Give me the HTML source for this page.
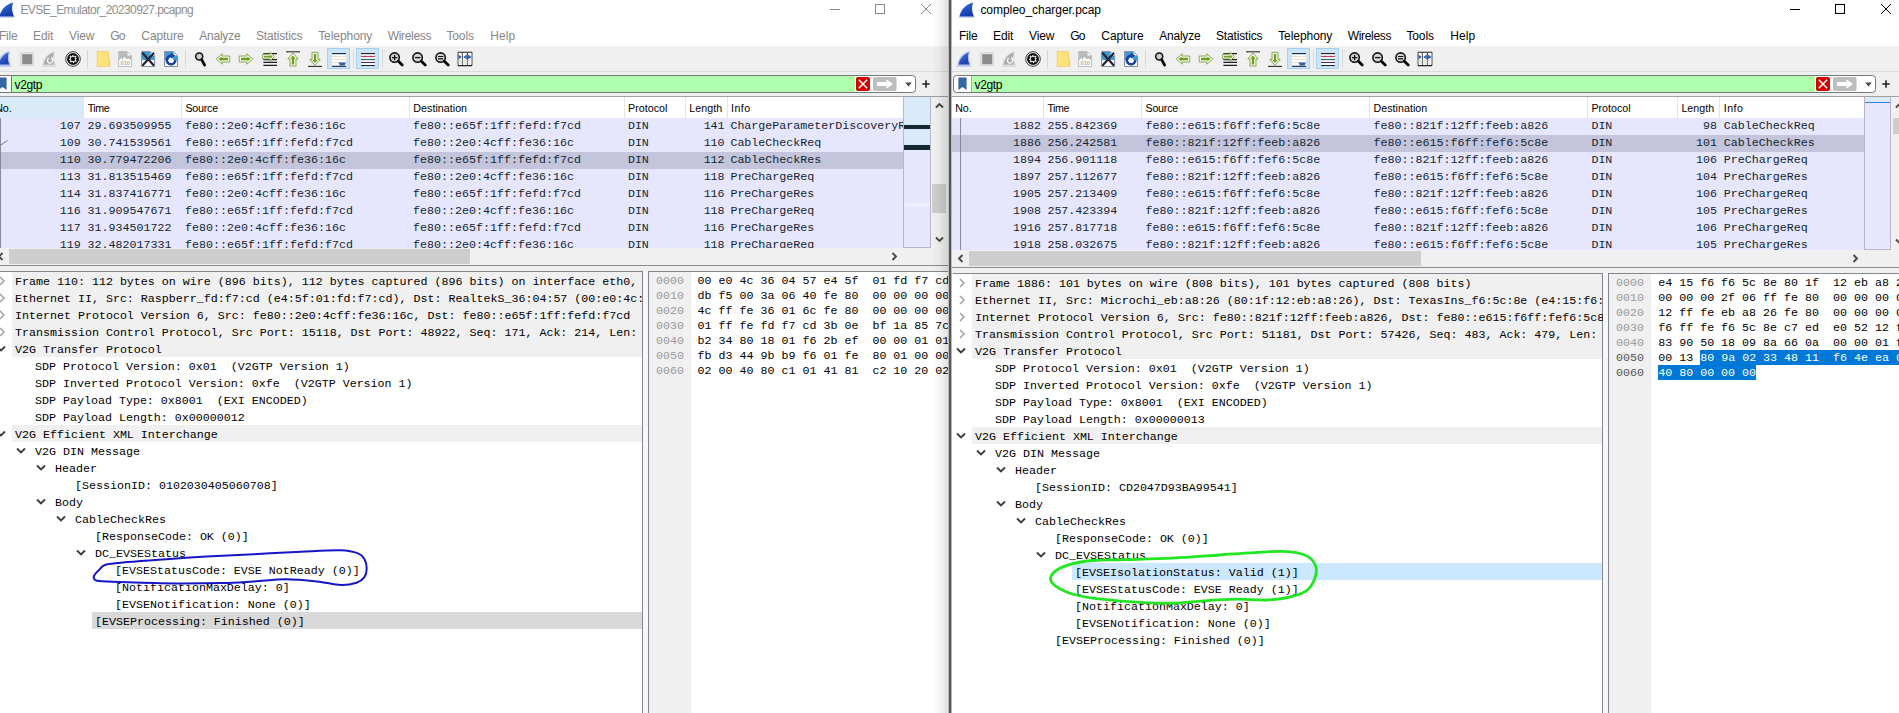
<!DOCTYPE html>
<html><head><meta charset="utf-8"><title>Wireshark</title><style>
html,body{margin:0;padding:0;}
body{width:1899px;height:713px;overflow:hidden;position:relative;background:#fff;}
#r{position:absolute;left:0;top:0;width:1899px;height:713px;overflow:hidden;}
#r div,#r span,#r svg{position:absolute;}
.s{font-family:'Liberation Sans', sans-serif;line-height:16px;height:16px;white-space:pre;}
.m{font-family:'Liberation Mono', monospace;font-size:11.67px;letter-spacing:-0.003px;line-height:16px;height:16px;white-space:pre;}
</style></head><body><div id="r">
<div style="left:-9px;top:0px;width:959px;height:713px;background:#fff;"></div>
<svg style="left:-0.8px;top:1.6px;" width="16" height="16" viewBox="0 0 16 16"><defs><linearGradient id="g1" x1="0" y1="0" x2="0.5" y2="1"><stop offset="0" stop-color="#2f78e6"/><stop offset="1" stop-color="#1238a6"/></linearGradient></defs><path d="M0.3,14.8 C1.5,9 5.5,2.5 14.2,0.4 C12.6,4.5 12.6,9.5 15.2,14.8 Z" fill="url(#g1)"/><path d="M0.3,15 L15.2,15" stroke="#9db6ea" stroke-width="1"/></svg>
<span class="s" style="left:20.4px;top:2px;font-size:12px;color:#8e8e8e;letter-spacing:-0.579px;">EVSE_Emulator_20230927.pcapng</span>
<svg style="left:829px;top:3px;" width="12" height="12" viewBox="0 0 12 12"><path d="M1,6.5 H11" stroke="#888" stroke-width="1"/></svg>
<svg style="left:874px;top:3px;" width="12" height="12" viewBox="0 0 12 12"><rect x="1.5" y="1.5" width="9" height="9" fill="none" stroke="#888" stroke-width="1"/></svg>
<svg style="left:920px;top:3px;" width="12" height="12" viewBox="0 0 12 12"><path d="M1,1 L11,11 M11,1 L1,11" stroke="#888" stroke-width="1"/></svg>
<span class="s" style="left:-1px;top:28px;font-size:12px;color:#868686;letter-spacing:-0.236px;">File</span>
<span class="s" style="left:33px;top:28px;font-size:12px;color:#868686;letter-spacing:-0.097px;">Edit</span>
<span class="s" style="left:69px;top:28px;font-size:12px;color:#868686;letter-spacing:-0.124px;">View</span>
<span class="s" style="left:110.2px;top:28px;font-size:12px;color:#868686;letter-spacing:-0.708px;">Go</span>
<span class="s" style="left:141.3px;top:28px;font-size:12px;color:#868686;letter-spacing:-0.072px;">Capture</span>
<span class="s" style="left:199.2px;top:28px;font-size:12px;color:#868686;letter-spacing:-0.215px;">Analyze</span>
<span class="s" style="left:256px;top:28px;font-size:12px;color:#868686;letter-spacing:-0.172px;">Statistics</span>
<span class="s" style="left:318.2px;top:28px;font-size:12px;color:#868686;letter-spacing:-0.069px;">Telephony</span>
<span class="s" style="left:387.7px;top:28px;font-size:12px;color:#868686;letter-spacing:-0.314px;">Wireless</span>
<span class="s" style="left:446.4px;top:28px;font-size:12px;color:#868686;letter-spacing:-0.103px;">Tools</span>
<span class="s" style="left:490.3px;top:28px;font-size:12px;color:#868686;letter-spacing:0.028px;">Help</span>
<div style="left:-9px;top:46px;width:959px;height:26px;background:#f0f0f0;"></div>
<div style="left:-9px;top:71px;width:959px;height:1px;background:#dadada;"></div>
<div style="left:-9px;top:72px;width:959px;height:25px;background:#f0f0f0;"></div>
<div style="left:327.3px;top:48px;width:22.6px;height:21px;background:#cce4f7;box-sizing:border-box;border:1px solid #a6d0f2;"></div>
<div style="left:356.4px;top:48px;width:22.6px;height:21px;background:#cce4f7;box-sizing:border-box;border:1px solid #a6d0f2;"></div>
<svg style="left:-4px;top:51px;" width="16" height="16" viewBox="0 0 16 16"><defs><linearGradient id="g2" x1="0" y1="0" x2="0.5" y2="1"><stop offset="0" stop-color="#4a76dc"/><stop offset="1" stop-color="#1f3fae"/></linearGradient></defs><path d="M2.6,13.6 C3.6,9 6.6,3.6 12.6,1.6 C11.6,5 11.6,9.4 13.4,13.6 Z" fill="#c9d7f3" stroke="#b3c6ef" stroke-width="2.6" stroke-linejoin="round"/><path d="M2.6,13.6 C3.6,9 6.6,3.6 12.6,1.6 C11.6,5 11.6,9.4 13.4,13.6 Z" fill="url(#g2)"/><path d="M0.6,15.3 H15.2" stroke="#a9bdea" stroke-width="0.8"/></svg>
<svg style="left:18.7px;top:51px;" width="16" height="16" viewBox="0 0 16 16"><rect x="1.7" y="1.7" width="13" height="13" fill="#e2e2e2" stroke="#cfcfcf" stroke-width="0.6"/><rect x="3.2" y="3.2" width="10" height="10" fill="#8c8c8c"/></svg>
<svg style="left:41px;top:51px;" width="16" height="16" viewBox="0 0 16 16"><path d="M2.6,13.6 C3.6,9 6.6,3.6 12.6,1.6 C11.6,5 11.6,9.4 13.4,13.6 Z" fill="#dedede" stroke="#d6d6d6" stroke-width="2.4" stroke-linejoin="round"/><path d="M2.6,13.6 C3.6,9 6.6,3.6 12.6,1.6 C11.6,5 11.6,9.4 13.4,13.6 Z" fill="#ababab"/><path d="M11.2,8 A2.6,2.6 0 1 1 8,7.2" fill="none" stroke="#f6f6f6" stroke-width="1.4"/><path d="M10.2,5.2 V8.6 H13.2 Z" fill="#f6f6f6"/><path d="M0.6,15.3 H15.2" stroke="#d0d8d4" stroke-width="0.8"/></svg>
<svg style="left:65px;top:51px;" width="16" height="16" viewBox="0 0 16 16"><circle cx="8" cy="8" r="7.3" fill="#fff" stroke="#222" stroke-width="0.9"/><circle cx="8" cy="8" r="5" fill="none" stroke="#151515" stroke-width="2"/><circle cx="8" cy="8" r="3.7" fill="none" stroke="#151515" stroke-width="1.2" stroke-dasharray="1.7 1.2"/><circle cx="8" cy="8" r="2.3" fill="#111"/></svg>
<svg style="left:94.5px;top:51px;" width="16" height="16" viewBox="0 0 16 16"><path d="M2.2,0.6 H13.6 V8.6 H14.8 V15.6 H2.2 Z" fill="#fde27e" stroke="#efcf62" stroke-width="0.8"/><path d="M13.6,8.6 V15.4" stroke="#efcf62" stroke-width="0.7"/></svg>
<svg style="left:116.7px;top:51px;" width="16" height="16" viewBox="0 0 16 16"><path d="M1.6,0.6 H10.4 L14.6,4.8 V15.6 H1.6 Z" fill="#fff" stroke="#b4b4b4" stroke-width="0.9"/><path d="M2.1,1.1 H10.2 L14.1,5 V9 H2.1 Z" fill="#b9b9b9"/><path d="M2.1,9.2 L4.2,6.8 L5.6,8.4 L7.4,5.6 L9.4,8.6 L11.2,7.2 L14.1,9.2 Z" fill="#fff"/><path d="M10.6,1.4 L13.8,4.6 H10.6 Z" fill="#fff"/><text x="8.2" y="14.2" font-family="Liberation Sans,sans-serif" font-size="5.6" fill="#b0b0b0" text-anchor="middle" font-weight="bold">010</text></svg>
<svg style="left:140px;top:51px;" width="16" height="16" viewBox="0 0 16 16"><path d="M1.6,0.6 H10.4 L14.6,4.8 V15.6 H1.6 Z" fill="#fff" stroke="#6d7f8f" stroke-width="0.9"/><path d="M2.1,1.1 H10.2 L14.1,5 V9 H2.1 Z" fill="#3c9ad2"/><path d="M10.6,1.4 L13.8,4.6 H10.6 Z" fill="#fff"/><path d="M3,2.4 L13.4,14 M13.4,2.4 L3,14" stroke="#23232f" stroke-width="2.2" stroke-linecap="round"/></svg>
<svg style="left:162.7px;top:51px;" width="16" height="16" viewBox="0 0 16 16"><path d="M1.6,0.6 H10.4 L14.6,4.8 V15.6 H1.6 Z" fill="#fff" stroke="#5f7f9f" stroke-width="0.9"/><path d="M2.1,1.1 H10.2 L14.1,5 V9 H2.1 Z" fill="#3c9ad2"/><path d="M10.6,1.4 L13.8,4.6 H10.6 Z" fill="#fff"/><circle cx="8" cy="9" r="2.2" fill="#fff"/><path d="M12.4,9 A4.3,4.3 0 1 1 8.6,4.7" fill="none" stroke="#1c3f9e" stroke-width="2.5"/><path d="M7.8,1.6 L12,4.4 L8.2,7.6 Z" fill="#1c3f9e"/></svg>
<svg style="left:192px;top:51px;" width="16" height="16" viewBox="0 0 16 16"><circle cx="7.2" cy="5.4" r="3.5" fill="#cdcdcd" stroke="#111" stroke-width="1.5"/><path d="M9.6,8.6 L12.6,14" stroke="#0a0a0a" stroke-width="2.8" stroke-linecap="round"/></svg>
<svg style="left:215px;top:51px;" width="16" height="16" viewBox="0 0 16 16"><path d="M1.2,8 L7.2,2.8 V5 H14.8 V11 H7.2 V13.2 Z" fill="#f6faea" stroke="#7d9e45" stroke-width="0.9" stroke-linejoin="round"/><path d="M3.6,8 L6.6,5.4 V6.8 H13 V9.2 H6.6 V10.6 Z" fill="#6da01c"/></svg>
<svg style="left:238px;top:51px;" width="16" height="16" viewBox="0 0 16 16"><path d="M1.2,8 L7.2,2.8 V5 H14.8 V11 H7.2 V13.2 Z" fill="#f6faea" stroke="#7d9e45" stroke-width="0.9" stroke-linejoin="round" transform="translate(16,0) scale(-1,1)"/><path d="M3.6,8 L6.6,5.4 V6.8 H13 V9.2 H6.6 V10.6 Z" fill="#6da01c" transform="translate(16,0) scale(-1,1)"/></svg>
<svg style="left:261.5px;top:51px;" width="16" height="16" viewBox="0 0 16 16"><path d="M1.4,2.6 H15 M1.4,8.6 H15 M1.4,11.4 H15 M1.4,14.4 H15" stroke="#1d1d1d" stroke-width="1.2"/><path d="M12.6,5.6 L8,1.4 V3.2 H0.6 V8 H8 V9.8 Z" fill="#f6faea" stroke="#7d9e45" stroke-width="0.9" stroke-linejoin="round"/><path d="M10.6,5.6 L8.6,3.8 V4.8 H2 V6.4 H8.6 V7.4 Z" fill="#6da01c"/></svg>
<svg style="left:284.5px;top:51px;" width="16" height="16" viewBox="0 0 16 16"><path d="M1,0.8 H15" stroke="#2a2a2a" stroke-width="1.1"/><path d="M8,2 L13.2,8 H11 V15 H5 V8 H2.8 Z" fill="#f6faea" stroke="#7d9e45" stroke-width="0.9" stroke-linejoin="round"/><path d="M8,4.4 L10.6,7.4 H9.2 V13.4 H6.8 V7.4 H5.4 Z" fill="#6da01c"/></svg>
<svg style="left:307px;top:51px;" width="16" height="16" viewBox="0 0 16 16"><path d="M1,15.4 H15" stroke="#2a2a2a" stroke-width="1.1"/><path d="M8,14.4 L13.2,8.4 H11 V1.4 H5 V8.4 H2.8 Z" fill="#f6faea" stroke="#7d9e45" stroke-width="0.9" stroke-linejoin="round"/><path d="M8,12 L10.6,9 H9.2 V3 H6.8 V9 H5.4 Z" fill="#6da01c"/></svg>
<svg style="left:330.6px;top:51px;" width="16" height="16" viewBox="0 0 16 16"><rect x="1" y="2" width="14" height="13" fill="#fff"/><path d="M1,2.6 H15" stroke="#1c2d4a" stroke-width="1.2"/><path d="M1,5.4 H15 M1,8.4 H15 M1,11.6 H15" stroke="#efd9c8" stroke-width="1"/><path d="M1,15.3 H15" stroke="#1c2d4a" stroke-width="1.2"/><path d="M7.4,11.4 H15 L13.4,14.6 H9 Z" fill="#3a5fa8"/></svg>
<svg style="left:359.7px;top:51px;" width="16" height="16" viewBox="0 0 16 16"><rect x="1" y="2" width="14" height="13.6" fill="#fff"/><path d="M1,2.6 H15" stroke="#1a1a22" stroke-width="1.1"/><path d="M1,5.4 H15" stroke="#c8324a" stroke-width="1.1"/><path d="M1,8.6 H15" stroke="#2a5a4a" stroke-width="1.1"/><path d="M1,11.5 H15" stroke="#4a2a5a" stroke-width="1.1"/><path d="M1,14.6 H15" stroke="#14203a" stroke-width="1.1"/></svg>
<svg style="left:388px;top:51px;" width="16" height="16" viewBox="0 0 16 16"><circle cx="6.6" cy="6.6" r="4.7" fill="#d2d2d2" stroke="#111" stroke-width="1.6"/><path d="M10.4,10.2 L14.2,14" stroke="#0a0a0a" stroke-width="2.8" stroke-linecap="round"/><path d="M4,6.6 H9.2 M6.6,4 V9.2" stroke="#111" stroke-width="1.3"/></svg>
<svg style="left:411px;top:51px;" width="16" height="16" viewBox="0 0 16 16"><circle cx="6.6" cy="6.6" r="4.7" fill="#d2d2d2" stroke="#111" stroke-width="1.6"/><path d="M10.4,10.2 L14.2,14" stroke="#0a0a0a" stroke-width="2.8" stroke-linecap="round"/><path d="M4,6.6 H9.2" stroke="#111" stroke-width="1.3"/></svg>
<svg style="left:434px;top:51px;" width="16" height="16" viewBox="0 0 16 16"><circle cx="6.6" cy="6.6" r="4.7" fill="#d2d2d2" stroke="#111" stroke-width="1.6"/><path d="M10.4,10.2 L14.2,14" stroke="#0a0a0a" stroke-width="2.8" stroke-linecap="round"/><path d="M4,5.5 H9.2 M4,7.8 H9.2" stroke="#111" stroke-width="1.2"/></svg>
<svg style="left:457px;top:51px;" width="16" height="16" viewBox="0 0 16 16"><rect x="1" y="1.2" width="14" height="13.4" fill="#fff"/><path d="M1,1.2 H15 M1,14.6 H15" stroke="#222" stroke-width="1.1"/><path d="M5.4,1.2 V14.6 M10.4,1.2 V14.6 M1,1.2 V14.6 M15,1.2 V14.6" stroke="#333" stroke-width="0.9"/><path d="M1,9.6 H15 M1,12 H15" stroke="#c8c8c8" stroke-width="0.7"/><path d="M1.4,3.4 L4.8,6 L1.4,8.6 Z M9.8,3.4 L6.2,6 L9.8,8.6 Z M11,3.4 L14.6,6 L11,8.6Z" fill="#3d5fae"/></svg>
<div style="left:87.4px;top:50px;width:1px;height:18px;background:#d8d8d8;"></div>
<div style="left:185px;top:50px;width:1px;height:18px;background:#d8d8d8;"></div>
<div style="left:353.4px;top:50px;width:1px;height:18px;background:#d8d8d8;"></div>
<div style="left:382px;top:50px;width:1px;height:18px;background:#d8d8d8;"></div>
<div style="left:-7px;top:75px;width:923px;height:18px;background:#fff;box-sizing:border-box;border:1px solid #767676;border-radius:3.5px;"></div>
<div style="left:11.6px;top:76px;width:843.4px;height:16px;background:#afffaf;"></div>
<div style="left:11px;top:76px;width:1px;height:16px;background:#6a7a6a;"></div>
<svg style="left:-2.5px;top:77.3px;" width="9" height="13.5" viewBox="0 0 9 13.5"><path d="M0.4,0.4 H8.6 V13 L4.5,10 L0.4,13 Z" fill="#3465a4"/></svg>
<span class="s" style="left:14.6px;top:77px;font-size:12px;color:#000;letter-spacing:-0.392px;">v2gtp</span>
<svg style="left:856px;top:77px;" width="14" height="14" viewBox="0 0 14 14"><rect x="0" y="0" width="14" height="14" rx="2" fill="#d40000"/><path d="M2.8,2.8 L11.2,11.2 M11.2,2.8 L2.8,11.2" stroke="#fff" stroke-width="1.5"/></svg>
<svg style="left:873px;top:77px;" width="23.5" height="14" viewBox="0 0 23.5 14"><rect x="0" y="0" width="23.5" height="14" rx="2" fill="#bdbdbd"/><path d="M4,5 H13.4 V2.2 L20,7 L13.4,11.8 V9 H4 Z" fill="#fff"/></svg>
<svg style="left:904.6px;top:81.8px;" width="7" height="5" viewBox="0 0 7 5"><path d="M0.2,0.6 H6.8 L3.5,4.4 Z" fill="#4a4a4a"/></svg>
<svg style="left:922px;top:79.6px;" width="8" height="8" viewBox="0 0 8 8"><path d="M4,0.3 V7.7 M0.3,4 H7.7" stroke="#222" stroke-width="1.6"/></svg>
<div style="left:-9px;top:96px;width:959px;height:1px;background:#a0a0a0;"></div>
<div style="left:-8px;top:97px;width:911px;height:21px;background:#fff;"></div>
<div style="left:-8px;top:118px;width:911px;height:130px;background:#e7e6ff;"></div>
<div style="left:-8px;top:97px;width:91px;height:21px;background:#d9ebf9;"></div>
<span class="s" style="left:-4.8px;top:99.8px;font-size:10.67px;color:#000;letter-spacing:-0.065px;">No.</span>
<div style="left:83px;top:97px;width:1px;height:21px;background:#e5e5e5;"></div>
<span class="s" style="left:87.7px;top:99.8px;font-size:10.67px;color:#000;letter-spacing:-0.449px;">Time</span>
<div style="left:181px;top:97px;width:1px;height:21px;background:#e5e5e5;"></div>
<span class="s" style="left:185.4px;top:99.8px;font-size:10.67px;color:#000;letter-spacing:-0.211px;">Source</span>
<div style="left:409px;top:97px;width:1px;height:21px;background:#e5e5e5;"></div>
<span class="s" style="left:413.3px;top:99.8px;font-size:10.67px;color:#000;letter-spacing:0.044px;">Destination</span>
<div style="left:624px;top:97px;width:1px;height:21px;background:#e5e5e5;"></div>
<span class="s" style="left:628.1px;top:99.8px;font-size:10.67px;color:#000;letter-spacing:0.013px;">Protocol</span>
<div style="left:685px;top:97px;width:1px;height:21px;background:#e5e5e5;"></div>
<span class="s" style="left:689.3px;top:99.8px;font-size:10.67px;color:#000;letter-spacing:0.034px;">Length</span>
<div style="left:727px;top:97px;width:1px;height:21px;background:#e5e5e5;"></div>
<span class="s" style="left:731px;top:99.8px;font-size:10.67px;color:#000;letter-spacing:0.480px;">Info</span>
<div style="left:-8px;top:118px;width:911px;height:17px;overflow:hidden;">
<span class="m" style="right:822.2px;top:0.4px;color:#12272e">107</span>
<span class="m" style="left:95.5px;top:0.4px;color:#12272e">29.693509955</span>
<span class="m" style="left:193.1px;top:0.4px;color:#12272e">fe80::2e0:4cff:fe36:16c</span>
<span class="m" style="left:421.1px;top:0.4px;color:#12272e">fe80::e65f:1ff:fefd:f7cd</span>
<span class="m" style="left:635.9px;top:0.4px;color:#12272e">DIN</span>
<span class="m" style="right:178.4px;top:0.4px;color:#12272e">141</span>
<span class="m" style="left:738.4px;top:0.4px;color:#12272e">ChargeParameterDiscoveryRes</span>
</div>
<div style="left:-8px;top:135px;width:911px;height:17px;overflow:hidden;">
<span class="m" style="right:822.2px;top:0.4px;color:#12272e">109</span>
<span class="m" style="left:95.5px;top:0.4px;color:#12272e">30.741539561</span>
<span class="m" style="left:193.1px;top:0.4px;color:#12272e">fe80::e65f:1ff:fefd:f7cd</span>
<span class="m" style="left:421.1px;top:0.4px;color:#12272e">fe80::2e0:4cff:fe36:16c</span>
<span class="m" style="left:635.9px;top:0.4px;color:#12272e">DIN</span>
<span class="m" style="right:178.4px;top:0.4px;color:#12272e">110</span>
<span class="m" style="left:738.4px;top:0.4px;color:#12272e">CableCheckReq</span>
</div>
<div style="left:-8px;top:152px;width:911px;height:17px;background:#c4c4dc;"></div>
<div style="left:-8px;top:152px;width:911px;height:17px;overflow:hidden;">
<span class="m" style="right:822.2px;top:0.4px;color:#12272e">110</span>
<span class="m" style="left:95.5px;top:0.4px;color:#12272e">30.779472206</span>
<span class="m" style="left:193.1px;top:0.4px;color:#12272e">fe80::2e0:4cff:fe36:16c</span>
<span class="m" style="left:421.1px;top:0.4px;color:#12272e">fe80::e65f:1ff:fefd:f7cd</span>
<span class="m" style="left:635.9px;top:0.4px;color:#12272e">DIN</span>
<span class="m" style="right:178.4px;top:0.4px;color:#12272e">112</span>
<span class="m" style="left:738.4px;top:0.4px;color:#12272e">CableCheckRes</span>
</div>
<div style="left:-8px;top:169px;width:911px;height:17px;overflow:hidden;">
<span class="m" style="right:822.2px;top:0.4px;color:#12272e">113</span>
<span class="m" style="left:95.5px;top:0.4px;color:#12272e">31.813515469</span>
<span class="m" style="left:193.1px;top:0.4px;color:#12272e">fe80::e65f:1ff:fefd:f7cd</span>
<span class="m" style="left:421.1px;top:0.4px;color:#12272e">fe80::2e0:4cff:fe36:16c</span>
<span class="m" style="left:635.9px;top:0.4px;color:#12272e">DIN</span>
<span class="m" style="right:178.4px;top:0.4px;color:#12272e">118</span>
<span class="m" style="left:738.4px;top:0.4px;color:#12272e">PreChargeReq</span>
</div>
<div style="left:-8px;top:186px;width:911px;height:17px;overflow:hidden;">
<span class="m" style="right:822.2px;top:0.4px;color:#12272e">114</span>
<span class="m" style="left:95.5px;top:0.4px;color:#12272e">31.837416771</span>
<span class="m" style="left:193.1px;top:0.4px;color:#12272e">fe80::2e0:4cff:fe36:16c</span>
<span class="m" style="left:421.1px;top:0.4px;color:#12272e">fe80::e65f:1ff:fefd:f7cd</span>
<span class="m" style="left:635.9px;top:0.4px;color:#12272e">DIN</span>
<span class="m" style="right:178.4px;top:0.4px;color:#12272e">116</span>
<span class="m" style="left:738.4px;top:0.4px;color:#12272e">PreChargeRes</span>
</div>
<div style="left:-8px;top:203px;width:911px;height:17px;overflow:hidden;">
<span class="m" style="right:822.2px;top:0.4px;color:#12272e">116</span>
<span class="m" style="left:95.5px;top:0.4px;color:#12272e">31.909547671</span>
<span class="m" style="left:193.1px;top:0.4px;color:#12272e">fe80::e65f:1ff:fefd:f7cd</span>
<span class="m" style="left:421.1px;top:0.4px;color:#12272e">fe80::2e0:4cff:fe36:16c</span>
<span class="m" style="left:635.9px;top:0.4px;color:#12272e">DIN</span>
<span class="m" style="right:178.4px;top:0.4px;color:#12272e">118</span>
<span class="m" style="left:738.4px;top:0.4px;color:#12272e">PreChargeReq</span>
</div>
<div style="left:-8px;top:220px;width:911px;height:17px;overflow:hidden;">
<span class="m" style="right:822.2px;top:0.4px;color:#12272e">117</span>
<span class="m" style="left:95.5px;top:0.4px;color:#12272e">31.934501722</span>
<span class="m" style="left:193.1px;top:0.4px;color:#12272e">fe80::2e0:4cff:fe36:16c</span>
<span class="m" style="left:421.1px;top:0.4px;color:#12272e">fe80::e65f:1ff:fefd:f7cd</span>
<span class="m" style="left:635.9px;top:0.4px;color:#12272e">DIN</span>
<span class="m" style="right:178.4px;top:0.4px;color:#12272e">116</span>
<span class="m" style="left:738.4px;top:0.4px;color:#12272e">PreChargeRes</span>
</div>
<div style="left:-8px;top:237px;width:911px;height:11px;overflow:hidden;">
<span class="m" style="right:822.2px;top:0.4px;color:#12272e">119</span>
<span class="m" style="left:95.5px;top:0.4px;color:#12272e">32.482017331</span>
<span class="m" style="left:193.1px;top:0.4px;color:#12272e">fe80::e65f:1ff:fefd:f7cd</span>
<span class="m" style="left:421.1px;top:0.4px;color:#12272e">fe80::2e0:4cff:fe36:16c</span>
<span class="m" style="left:635.9px;top:0.4px;color:#12272e">DIN</span>
<span class="m" style="right:178.4px;top:0.4px;color:#12272e">118</span>
<span class="m" style="left:738.4px;top:0.4px;color:#12272e">PreChargeReq</span>
</div>
<div style="left:0px;top:118px;width:1px;height:130px;background:#8a8a9a;"></div>
<svg style="left:0px;top:138.5px;" width="9" height="8" viewBox="0 0 9 8"><path d="M0,6.5 L7.5,1.5" stroke="#7a7a8a" stroke-width="1" fill="none"/></svg>
<div style="left:903px;top:97px;width:27.5px;height:151px;background:#e7e6ff;box-sizing:border-box;border:1px solid #b8b8c8;border-top:none;"></div>
<div style="left:904px;top:97px;width:25.5px;height:50px;background:#d9eafa;"></div>
<div style="left:904px;top:124.5px;width:25.5px;height:4.5px;background:#12272e;"></div>
<div style="left:904px;top:145px;width:25.5px;height:4.5px;background:#12272e;"></div>
<div style="left:904px;top:203px;width:25.5px;height:4px;background:#efefff;"></div>
<div style="left:930.5px;top:97px;width:17px;height:151px;background:#f0f0f0;"></div>
<svg style="left:934.5px;top:102px;" width="9" height="7" viewBox="0 0 9 7"><path d="M1,5.5 L4.5,2 L8,5.5" fill="none" stroke="#484848" stroke-width="1.9"/></svg>
<svg style="left:934.5px;top:236px;" width="9" height="7" viewBox="0 0 9 7"><path d="M1,1.5 L4.5,5 L8,1.5" fill="none" stroke="#484848" stroke-width="1.9"/></svg>
<div style="left:932px;top:184px;width:14px;height:28.7px;background:#cdcdcd;"></div>
<div style="left:-9px;top:248px;width:959px;height:17px;background:#f0f0f0;"></div>
<div style="left:9px;top:249px;width:461px;height:15px;background:#cdcdcd;"></div>
<svg style="left:-3px;top:252px;" width="7" height="9" viewBox="0 0 7 9"><path d="M5.5,1 L2,4.5 L5.5,8" fill="none" stroke="#484848" stroke-width="1.9"/></svg>
<svg style="left:891px;top:252px;" width="7" height="9" viewBox="0 0 7 9"><path d="M1.5,1 L5,4.5 L1.5,8" fill="none" stroke="#484848" stroke-width="1.9"/></svg>
<div style="left:-9px;top:265px;width:959px;height:1px;background:#8c8c8c;"></div>
<div style="left:-9px;top:266px;width:959px;height:6px;background:#f0f0f0;"></div>
<div style="left:-7px;top:271px;width:650px;height:713px;background:#fff;box-sizing:border-box;border:1px solid #828790;border-left:none;"></div>
<div style="left:12px;top:272px;width:630px;height:17px;background:#f0f0f0;"></div>
<span class="m" style="left:15px;top:273.6px;color:#000;">Frame 110: 112 bytes on wire (896 bits), 112 bytes captured (896 bits) on interface eth0, id 0</span>
<svg style="left:-2.5px;top:275.5px;" width="8" height="10" viewBox="0 0 8 10"><path d="M2,1 L6,5 L2,9" fill="none" stroke="#a0a0a0" stroke-width="1.5"/></svg>
<div style="left:12px;top:289px;width:630px;height:17px;background:#f0f0f0;"></div>
<span class="m" style="left:15px;top:290.6px;color:#000;">Ethernet II, Src: Raspberr_fd:f7:cd (e4:5f:01:fd:f7:cd), Dst: RealtekS_36:04:57 (00:e0:4c:36:04:57)</span>
<svg style="left:-2.5px;top:292.5px;" width="8" height="10" viewBox="0 0 8 10"><path d="M2,1 L6,5 L2,9" fill="none" stroke="#a0a0a0" stroke-width="1.5"/></svg>
<div style="left:12px;top:306px;width:630px;height:17px;background:#f0f0f0;"></div>
<span class="m" style="left:15px;top:307.6px;color:#000;">Internet Protocol Version 6, Src: fe80::2e0:4cff:fe36:16c, Dst: fe80::e65f:1ff:fefd:f7cd</span>
<svg style="left:-2.5px;top:309.5px;" width="8" height="10" viewBox="0 0 8 10"><path d="M2,1 L6,5 L2,9" fill="none" stroke="#a0a0a0" stroke-width="1.5"/></svg>
<div style="left:12px;top:323px;width:630px;height:17px;background:#f0f0f0;"></div>
<span class="m" style="left:15px;top:324.6px;color:#000;">Transmission Control Protocol, Src Port: 15118, Dst Port: 48922, Seq: 171, Ack: 214, Len: 26</span>
<svg style="left:-2.5px;top:326.5px;" width="8" height="10" viewBox="0 0 8 10"><path d="M2,1 L6,5 L2,9" fill="none" stroke="#a0a0a0" stroke-width="1.5"/></svg>
<div style="left:12px;top:340px;width:630px;height:17px;background:#f0f0f0;"></div>
<span class="m" style="left:15px;top:341.6px;color:#000;">V2G Transfer Protocol</span>
<svg style="left:-4px;top:345px;" width="10" height="8" viewBox="0 0 10 8"><path d="M1,1.5 L5,5.5 L9,1.5" fill="none" stroke="#3c3c3c" stroke-width="1.8"/></svg>
<span class="m" style="left:35px;top:358.6px;color:#000;">SDP Protocol Version: 0x01  (V2GTP Version 1)</span>
<span class="m" style="left:35px;top:375.6px;color:#000;">SDP Inverted Protocol Version: 0xfe  (V2GTP Version 1)</span>
<span class="m" style="left:35px;top:392.6px;color:#000;">SDP Payload Type: 0x8001  (EXI ENCODED)</span>
<span class="m" style="left:35px;top:409.6px;color:#000;">SDP Payload Length: 0x00000012</span>
<div style="left:12px;top:425px;width:630px;height:17px;background:#f0f0f0;"></div>
<span class="m" style="left:15px;top:426.6px;color:#000;">V2G Efficient XML Interchange</span>
<svg style="left:-4px;top:430px;" width="10" height="8" viewBox="0 0 10 8"><path d="M1,1.5 L5,5.5 L9,1.5" fill="none" stroke="#3c3c3c" stroke-width="1.8"/></svg>
<span class="m" style="left:35px;top:443.6px;color:#000;">V2G DIN Message</span>
<svg style="left:16px;top:447px;" width="10" height="8" viewBox="0 0 10 8"><path d="M1,1.5 L5,5.5 L9,1.5" fill="none" stroke="#3c3c3c" stroke-width="1.8"/></svg>
<span class="m" style="left:55px;top:460.6px;color:#000;">Header</span>
<svg style="left:36px;top:464px;" width="10" height="8" viewBox="0 0 10 8"><path d="M1,1.5 L5,5.5 L9,1.5" fill="none" stroke="#3c3c3c" stroke-width="1.8"/></svg>
<span class="m" style="left:75px;top:477.6px;color:#000;">[SessionID: 0102030405060708]</span>
<span class="m" style="left:55px;top:494.6px;color:#000;">Body</span>
<svg style="left:36px;top:498px;" width="10" height="8" viewBox="0 0 10 8"><path d="M1,1.5 L5,5.5 L9,1.5" fill="none" stroke="#3c3c3c" stroke-width="1.8"/></svg>
<span class="m" style="left:75px;top:511.6px;color:#000;">CableCheckRes</span>
<svg style="left:56px;top:515px;" width="10" height="8" viewBox="0 0 10 8"><path d="M1,1.5 L5,5.5 L9,1.5" fill="none" stroke="#3c3c3c" stroke-width="1.8"/></svg>
<span class="m" style="left:95px;top:528.6px;color:#000;">[ResponseCode: OK (0)]</span>
<span class="m" style="left:95px;top:545.6px;color:#000;">DC_EVSEStatus</span>
<svg style="left:76px;top:549px;" width="10" height="8" viewBox="0 0 10 8"><path d="M1,1.5 L5,5.5 L9,1.5" fill="none" stroke="#3c3c3c" stroke-width="1.8"/></svg>
<span class="m" style="left:115px;top:562.6px;color:#000;">[EVSEStatusCode: EVSE NotReady (0)]</span>
<span class="m" style="left:115px;top:579.6px;color:#000;">[NotificationMaxDelay: 0]</span>
<span class="m" style="left:115px;top:596.6px;color:#000;">[EVSENotification: None (0)]</span>
<div style="left:92px;top:612px;width:550px;height:17px;background:#d9d9d9;"></div>
<span class="m" style="left:95px;top:613.6px;color:#000;">[EVSEProcessing: Finished (0)]</span>
<div style="left:643px;top:271px;width:5px;height:713px;background:#f7f7f7;"></div>
<div style="left:648px;top:271px;width:400px;height:713px;background:#fff;box-sizing:border-box;border:1px solid #828790;"></div>
<div style="left:649px;top:272px;width:42px;height:713px;background:#f0f0f0;"></div>
<span class="m" style="left:656px;top:272.9px;color:#9a9a9a;">0000</span>
<span class="m" style="left:697.6px;top:272.9px;color:#000;">00 e0 4c 36 04 57 e4 5f  01 fd f7 cd 86 dd 60 0b</span>
<span class="m" style="left:656px;top:287.9px;color:#9a9a9a;">0010</span>
<span class="m" style="left:697.6px;top:287.9px;color:#000;">db f5 00 3a 06 40 fe 80  00 00 00 00 00 00 02 e0</span>
<span class="m" style="left:656px;top:302.9px;color:#9a9a9a;">0020</span>
<span class="m" style="left:697.6px;top:302.9px;color:#000;">4c ff fe 36 01 6c fe 80  00 00 00 00 00 00 e6 5f</span>
<span class="m" style="left:656px;top:317.9px;color:#9a9a9a;">0030</span>
<span class="m" style="left:697.6px;top:317.9px;color:#000;">01 ff fe fd f7 cd 3b 0e  bf 1a 85 7c 6f 36 b4 a1</span>
<span class="m" style="left:656px;top:332.9px;color:#9a9a9a;">0040</span>
<span class="m" style="left:697.6px;top:332.9px;color:#000;">b2 34 80 18 01 f6 2b ef  00 00 01 01 08 0a 7d 5e</span>
<span class="m" style="left:656px;top:347.9px;color:#9a9a9a;">0050</span>
<span class="m" style="left:697.6px;top:347.9px;color:#000;">fb d3 44 9b b9 f6 01 fe  80 01 00 00 00 12 80 9a</span>
<span class="m" style="left:656px;top:362.9px;color:#9a9a9a;">0060</span>
<span class="m" style="left:697.6px;top:362.9px;color:#000;">02 00 40 80 c1 01 41 81  c2 10 20 02 00 00 00 00</span>
<div style="left:932px;top:0;width:17px;height:713px;background:linear-gradient(to right,rgba(0,0,0,0),rgba(0,0,0,0.03) 40%,rgba(0,0,0,0.13));"></div>
<div style="left:951px;top:0px;width:959px;height:713px;background:#fff;"></div>
<svg style="left:959.2px;top:1.6px;" width="16" height="16" viewBox="0 0 16 16"><defs><linearGradient id="g3" x1="0" y1="0" x2="0.5" y2="1"><stop offset="0" stop-color="#2f78e6"/><stop offset="1" stop-color="#1238a6"/></linearGradient></defs><path d="M0.3,14.8 C1.5,9 5.5,2.5 14.2,0.4 C12.6,4.5 12.6,9.5 15.2,14.8 Z" fill="url(#g3)"/><path d="M0.3,15 L15.2,15" stroke="#9db6ea" stroke-width="1"/></svg>
<span class="s" style="left:980.4px;top:2px;font-size:12px;color:#000;letter-spacing:-0.041px;">compleo_charger.pcap</span>
<svg style="left:1789px;top:3px;" width="12" height="12" viewBox="0 0 12 12"><path d="M1,6.5 H11" stroke="#000" stroke-width="1"/></svg>
<svg style="left:1834px;top:3px;" width="12" height="12" viewBox="0 0 12 12"><rect x="1.5" y="1.5" width="9" height="9" fill="none" stroke="#000" stroke-width="1"/></svg>
<svg style="left:1880px;top:3px;" width="12" height="12" viewBox="0 0 12 12"><path d="M1,1 L11,11 M11,1 L1,11" stroke="#000" stroke-width="1"/></svg>
<span class="s" style="left:959px;top:28px;font-size:12px;color:#000;letter-spacing:-0.236px;">File</span>
<span class="s" style="left:993px;top:28px;font-size:12px;color:#000;letter-spacing:-0.097px;">Edit</span>
<span class="s" style="left:1029px;top:28px;font-size:12px;color:#000;letter-spacing:-0.124px;">View</span>
<span class="s" style="left:1070.2px;top:28px;font-size:12px;color:#000;letter-spacing:-0.708px;">Go</span>
<span class="s" style="left:1101.3px;top:28px;font-size:12px;color:#000;letter-spacing:-0.072px;">Capture</span>
<span class="s" style="left:1159.2px;top:28px;font-size:12px;color:#000;letter-spacing:-0.215px;">Analyze</span>
<span class="s" style="left:1216px;top:28px;font-size:12px;color:#000;letter-spacing:-0.172px;">Statistics</span>
<span class="s" style="left:1278.2px;top:28px;font-size:12px;color:#000;letter-spacing:-0.069px;">Telephony</span>
<span class="s" style="left:1347.7px;top:28px;font-size:12px;color:#000;letter-spacing:-0.314px;">Wireless</span>
<span class="s" style="left:1406.4px;top:28px;font-size:12px;color:#000;letter-spacing:-0.103px;">Tools</span>
<span class="s" style="left:1450.3px;top:28px;font-size:12px;color:#000;letter-spacing:0.028px;">Help</span>
<div style="left:951px;top:46px;width:959px;height:26px;background:#f0f0f0;"></div>
<div style="left:951px;top:71px;width:959px;height:1px;background:#dadada;"></div>
<div style="left:951px;top:72px;width:959px;height:25px;background:#f0f0f0;"></div>
<div style="left:1287.3px;top:48px;width:22.6px;height:21px;background:#cce4f7;box-sizing:border-box;border:1px solid #a6d0f2;"></div>
<div style="left:1316.4px;top:48px;width:22.6px;height:21px;background:#cce4f7;box-sizing:border-box;border:1px solid #a6d0f2;"></div>
<svg style="left:956px;top:51px;" width="16" height="16" viewBox="0 0 16 16"><defs><linearGradient id="g4" x1="0" y1="0" x2="0.5" y2="1"><stop offset="0" stop-color="#4a76dc"/><stop offset="1" stop-color="#1f3fae"/></linearGradient></defs><path d="M2.6,13.6 C3.6,9 6.6,3.6 12.6,1.6 C11.6,5 11.6,9.4 13.4,13.6 Z" fill="#c9d7f3" stroke="#b3c6ef" stroke-width="2.6" stroke-linejoin="round"/><path d="M2.6,13.6 C3.6,9 6.6,3.6 12.6,1.6 C11.6,5 11.6,9.4 13.4,13.6 Z" fill="url(#g4)"/><path d="M0.6,15.3 H15.2" stroke="#a9bdea" stroke-width="0.8"/></svg>
<svg style="left:978.7px;top:51px;" width="16" height="16" viewBox="0 0 16 16"><rect x="1.7" y="1.7" width="13" height="13" fill="#e2e2e2" stroke="#cfcfcf" stroke-width="0.6"/><rect x="3.2" y="3.2" width="10" height="10" fill="#8c8c8c"/></svg>
<svg style="left:1001px;top:51px;" width="16" height="16" viewBox="0 0 16 16"><path d="M2.6,13.6 C3.6,9 6.6,3.6 12.6,1.6 C11.6,5 11.6,9.4 13.4,13.6 Z" fill="#dedede" stroke="#d6d6d6" stroke-width="2.4" stroke-linejoin="round"/><path d="M2.6,13.6 C3.6,9 6.6,3.6 12.6,1.6 C11.6,5 11.6,9.4 13.4,13.6 Z" fill="#ababab"/><path d="M11.2,8 A2.6,2.6 0 1 1 8,7.2" fill="none" stroke="#f6f6f6" stroke-width="1.4"/><path d="M10.2,5.2 V8.6 H13.2 Z" fill="#f6f6f6"/><path d="M0.6,15.3 H15.2" stroke="#d0d8d4" stroke-width="0.8"/></svg>
<svg style="left:1025px;top:51px;" width="16" height="16" viewBox="0 0 16 16"><circle cx="8" cy="8" r="7.3" fill="#fff" stroke="#222" stroke-width="0.9"/><circle cx="8" cy="8" r="5" fill="none" stroke="#151515" stroke-width="2"/><circle cx="8" cy="8" r="3.7" fill="none" stroke="#151515" stroke-width="1.2" stroke-dasharray="1.7 1.2"/><circle cx="8" cy="8" r="2.3" fill="#111"/></svg>
<svg style="left:1054.5px;top:51px;" width="16" height="16" viewBox="0 0 16 16"><path d="M2.2,0.6 H13.6 V8.6 H14.8 V15.6 H2.2 Z" fill="#fde27e" stroke="#efcf62" stroke-width="0.8"/><path d="M13.6,8.6 V15.4" stroke="#efcf62" stroke-width="0.7"/></svg>
<svg style="left:1076.7px;top:51px;" width="16" height="16" viewBox="0 0 16 16"><path d="M1.6,0.6 H10.4 L14.6,4.8 V15.6 H1.6 Z" fill="#fff" stroke="#b4b4b4" stroke-width="0.9"/><path d="M2.1,1.1 H10.2 L14.1,5 V9 H2.1 Z" fill="#b9b9b9"/><path d="M2.1,9.2 L4.2,6.8 L5.6,8.4 L7.4,5.6 L9.4,8.6 L11.2,7.2 L14.1,9.2 Z" fill="#fff"/><path d="M10.6,1.4 L13.8,4.6 H10.6 Z" fill="#fff"/><text x="8.2" y="14.2" font-family="Liberation Sans,sans-serif" font-size="5.6" fill="#b0b0b0" text-anchor="middle" font-weight="bold">010</text></svg>
<svg style="left:1100px;top:51px;" width="16" height="16" viewBox="0 0 16 16"><path d="M1.6,0.6 H10.4 L14.6,4.8 V15.6 H1.6 Z" fill="#fff" stroke="#6d7f8f" stroke-width="0.9"/><path d="M2.1,1.1 H10.2 L14.1,5 V9 H2.1 Z" fill="#3c9ad2"/><path d="M10.6,1.4 L13.8,4.6 H10.6 Z" fill="#fff"/><path d="M3,2.4 L13.4,14 M13.4,2.4 L3,14" stroke="#23232f" stroke-width="2.2" stroke-linecap="round"/></svg>
<svg style="left:1122.7px;top:51px;" width="16" height="16" viewBox="0 0 16 16"><path d="M1.6,0.6 H10.4 L14.6,4.8 V15.6 H1.6 Z" fill="#fff" stroke="#5f7f9f" stroke-width="0.9"/><path d="M2.1,1.1 H10.2 L14.1,5 V9 H2.1 Z" fill="#3c9ad2"/><path d="M10.6,1.4 L13.8,4.6 H10.6 Z" fill="#fff"/><circle cx="8" cy="9" r="2.2" fill="#fff"/><path d="M12.4,9 A4.3,4.3 0 1 1 8.6,4.7" fill="none" stroke="#1c3f9e" stroke-width="2.5"/><path d="M7.8,1.6 L12,4.4 L8.2,7.6 Z" fill="#1c3f9e"/></svg>
<svg style="left:1152px;top:51px;" width="16" height="16" viewBox="0 0 16 16"><circle cx="7.2" cy="5.4" r="3.5" fill="#cdcdcd" stroke="#111" stroke-width="1.5"/><path d="M9.6,8.6 L12.6,14" stroke="#0a0a0a" stroke-width="2.8" stroke-linecap="round"/></svg>
<svg style="left:1175px;top:51px;" width="16" height="16" viewBox="0 0 16 16"><path d="M1.2,8 L7.2,2.8 V5 H14.8 V11 H7.2 V13.2 Z" fill="#f6faea" stroke="#7d9e45" stroke-width="0.9" stroke-linejoin="round"/><path d="M3.6,8 L6.6,5.4 V6.8 H13 V9.2 H6.6 V10.6 Z" fill="#6da01c"/></svg>
<svg style="left:1198px;top:51px;" width="16" height="16" viewBox="0 0 16 16"><path d="M1.2,8 L7.2,2.8 V5 H14.8 V11 H7.2 V13.2 Z" fill="#f6faea" stroke="#7d9e45" stroke-width="0.9" stroke-linejoin="round" transform="translate(16,0) scale(-1,1)"/><path d="M3.6,8 L6.6,5.4 V6.8 H13 V9.2 H6.6 V10.6 Z" fill="#6da01c" transform="translate(16,0) scale(-1,1)"/></svg>
<svg style="left:1221.5px;top:51px;" width="16" height="16" viewBox="0 0 16 16"><path d="M1.4,2.6 H15 M1.4,8.6 H15 M1.4,11.4 H15 M1.4,14.4 H15" stroke="#1d1d1d" stroke-width="1.2"/><path d="M12.6,5.6 L8,1.4 V3.2 H0.6 V8 H8 V9.8 Z" fill="#f6faea" stroke="#7d9e45" stroke-width="0.9" stroke-linejoin="round"/><path d="M10.6,5.6 L8.6,3.8 V4.8 H2 V6.4 H8.6 V7.4 Z" fill="#6da01c"/></svg>
<svg style="left:1244.5px;top:51px;" width="16" height="16" viewBox="0 0 16 16"><path d="M1,0.8 H15" stroke="#2a2a2a" stroke-width="1.1"/><path d="M8,2 L13.2,8 H11 V15 H5 V8 H2.8 Z" fill="#f6faea" stroke="#7d9e45" stroke-width="0.9" stroke-linejoin="round"/><path d="M8,4.4 L10.6,7.4 H9.2 V13.4 H6.8 V7.4 H5.4 Z" fill="#6da01c"/></svg>
<svg style="left:1267px;top:51px;" width="16" height="16" viewBox="0 0 16 16"><path d="M1,15.4 H15" stroke="#2a2a2a" stroke-width="1.1"/><path d="M8,14.4 L13.2,8.4 H11 V1.4 H5 V8.4 H2.8 Z" fill="#f6faea" stroke="#7d9e45" stroke-width="0.9" stroke-linejoin="round"/><path d="M8,12 L10.6,9 H9.2 V3 H6.8 V9 H5.4 Z" fill="#6da01c"/></svg>
<svg style="left:1290.6px;top:51px;" width="16" height="16" viewBox="0 0 16 16"><rect x="1" y="2" width="14" height="13" fill="#fff"/><path d="M1,2.6 H15" stroke="#1c2d4a" stroke-width="1.2"/><path d="M1,5.4 H15 M1,8.4 H15 M1,11.6 H15" stroke="#efd9c8" stroke-width="1"/><path d="M1,15.3 H15" stroke="#1c2d4a" stroke-width="1.2"/><path d="M7.4,11.4 H15 L13.4,14.6 H9 Z" fill="#3a5fa8"/></svg>
<svg style="left:1319.7px;top:51px;" width="16" height="16" viewBox="0 0 16 16"><rect x="1" y="2" width="14" height="13.6" fill="#fff"/><path d="M1,2.6 H15" stroke="#1a1a22" stroke-width="1.1"/><path d="M1,5.4 H15" stroke="#c8324a" stroke-width="1.1"/><path d="M1,8.6 H15" stroke="#2a5a4a" stroke-width="1.1"/><path d="M1,11.5 H15" stroke="#4a2a5a" stroke-width="1.1"/><path d="M1,14.6 H15" stroke="#14203a" stroke-width="1.1"/></svg>
<svg style="left:1348px;top:51px;" width="16" height="16" viewBox="0 0 16 16"><circle cx="6.6" cy="6.6" r="4.7" fill="#d2d2d2" stroke="#111" stroke-width="1.6"/><path d="M10.4,10.2 L14.2,14" stroke="#0a0a0a" stroke-width="2.8" stroke-linecap="round"/><path d="M4,6.6 H9.2 M6.6,4 V9.2" stroke="#111" stroke-width="1.3"/></svg>
<svg style="left:1371px;top:51px;" width="16" height="16" viewBox="0 0 16 16"><circle cx="6.6" cy="6.6" r="4.7" fill="#d2d2d2" stroke="#111" stroke-width="1.6"/><path d="M10.4,10.2 L14.2,14" stroke="#0a0a0a" stroke-width="2.8" stroke-linecap="round"/><path d="M4,6.6 H9.2" stroke="#111" stroke-width="1.3"/></svg>
<svg style="left:1394px;top:51px;" width="16" height="16" viewBox="0 0 16 16"><circle cx="6.6" cy="6.6" r="4.7" fill="#d2d2d2" stroke="#111" stroke-width="1.6"/><path d="M10.4,10.2 L14.2,14" stroke="#0a0a0a" stroke-width="2.8" stroke-linecap="round"/><path d="M4,5.5 H9.2 M4,7.8 H9.2" stroke="#111" stroke-width="1.2"/></svg>
<svg style="left:1417px;top:51px;" width="16" height="16" viewBox="0 0 16 16"><rect x="1" y="1.2" width="14" height="13.4" fill="#fff"/><path d="M1,1.2 H15 M1,14.6 H15" stroke="#222" stroke-width="1.1"/><path d="M5.4,1.2 V14.6 M10.4,1.2 V14.6 M1,1.2 V14.6 M15,1.2 V14.6" stroke="#333" stroke-width="0.9"/><path d="M1,9.6 H15 M1,12 H15" stroke="#c8c8c8" stroke-width="0.7"/><path d="M1.4,3.4 L4.8,6 L1.4,8.6 Z M9.8,3.4 L6.2,6 L9.8,8.6 Z M11,3.4 L14.6,6 L11,8.6Z" fill="#3d5fae"/></svg>
<div style="left:1047.4px;top:50px;width:1px;height:18px;background:#d8d8d8;"></div>
<div style="left:1145px;top:50px;width:1px;height:18px;background:#d8d8d8;"></div>
<div style="left:1313.4px;top:50px;width:1px;height:18px;background:#d8d8d8;"></div>
<div style="left:1342px;top:50px;width:1px;height:18px;background:#d8d8d8;"></div>
<div style="left:953px;top:75px;width:923px;height:18px;background:#fff;box-sizing:border-box;border:1px solid #767676;border-radius:3.5px;"></div>
<div style="left:971.6px;top:76px;width:843.4px;height:16px;background:#afffaf;"></div>
<div style="left:971px;top:76px;width:1px;height:16px;background:#9ab89a;"></div>
<svg style="left:957.5px;top:77.3px;" width="9" height="13.5" viewBox="0 0 9 13.5"><path d="M0.4,0.4 H8.6 V13 L4.5,10 L0.4,13 Z" fill="#3465a4"/></svg>
<span class="s" style="left:974.6px;top:77px;font-size:12px;color:#000;letter-spacing:-0.392px;">v2gtp</span>
<svg style="left:1816px;top:77px;" width="14" height="14" viewBox="0 0 14 14"><rect x="0" y="0" width="14" height="14" rx="2" fill="#d40000"/><path d="M2.8,2.8 L11.2,11.2 M11.2,2.8 L2.8,11.2" stroke="#fff" stroke-width="1.5"/></svg>
<svg style="left:1833px;top:77px;" width="23.5" height="14" viewBox="0 0 23.5 14"><rect x="0" y="0" width="23.5" height="14" rx="2" fill="#bdbdbd"/><path d="M4,5 H13.4 V2.2 L20,7 L13.4,11.8 V9 H4 Z" fill="#fff"/></svg>
<svg style="left:1864.6px;top:81.8px;" width="7" height="5" viewBox="0 0 7 5"><path d="M0.2,0.6 H6.8 L3.5,4.4 Z" fill="#4a4a4a"/></svg>
<svg style="left:1882px;top:79.6px;" width="8" height="8" viewBox="0 0 8 8"><path d="M4,0.3 V7.7 M0.3,4 H7.7" stroke="#222" stroke-width="1.6"/></svg>
<div style="left:951px;top:96px;width:959px;height:1px;background:#a0a0a0;"></div>
<div style="left:952px;top:97px;width:911.5px;height:21px;background:#fff;"></div>
<div style="left:952px;top:118px;width:911.5px;height:132px;background:#e7e6ff;"></div>
<span class="s" style="left:955.2px;top:99.8px;font-size:10.67px;color:#000;letter-spacing:-0.065px;">No.</span>
<div style="left:1043px;top:97px;width:1px;height:21px;background:#e5e5e5;"></div>
<span class="s" style="left:1047.4px;top:99.8px;font-size:10.67px;color:#000;letter-spacing:-0.449px;">Time</span>
<div style="left:1141px;top:97px;width:1px;height:21px;background:#e5e5e5;"></div>
<span class="s" style="left:1145.5px;top:99.8px;font-size:10.67px;color:#000;letter-spacing:-0.211px;">Source</span>
<div style="left:1369px;top:97px;width:1px;height:21px;background:#e5e5e5;"></div>
<span class="s" style="left:1373.5px;top:99.8px;font-size:10.67px;color:#000;letter-spacing:0.044px;">Destination</span>
<div style="left:1587px;top:97px;width:1px;height:21px;background:#e5e5e5;"></div>
<span class="s" style="left:1591.4px;top:99.8px;font-size:10.67px;color:#000;letter-spacing:0.013px;">Protocol</span>
<div style="left:1677px;top:97px;width:1px;height:21px;background:#e5e5e5;"></div>
<span class="s" style="left:1681.4px;top:99.8px;font-size:10.67px;color:#000;letter-spacing:0.034px;">Length</span>
<div style="left:1719px;top:97px;width:1px;height:21px;background:#e5e5e5;"></div>
<span class="s" style="left:1723.7px;top:99.8px;font-size:10.67px;color:#000;letter-spacing:0.480px;">Info</span>
<div style="left:952px;top:118px;width:911.5px;height:17px;overflow:hidden;">
<span class="m" style="right:822.6px;top:0.4px;color:#12272e">1882</span>
<span class="m" style="left:95.4px;top:0.4px;color:#12272e">255.842369</span>
<span class="m" style="left:193.5px;top:0.4px;color:#12272e">fe80::e615:f6ff:fef6:5c8e</span>
<span class="m" style="left:421.5px;top:0.4px;color:#12272e">fe80::821f:12ff:feeb:a826</span>
<span class="m" style="left:639.4px;top:0.4px;color:#12272e">DIN</span>
<span class="m" style="right:146.5px;top:0.4px;color:#12272e">98</span>
<span class="m" style="left:771.8px;top:0.4px;color:#12272e">CableCheckReq</span>
</div>
<div style="left:952px;top:135px;width:911.5px;height:17px;background:#c4c4dc;"></div>
<div style="left:952px;top:135px;width:911.5px;height:17px;overflow:hidden;">
<span class="m" style="right:822.6px;top:0.4px;color:#12272e">1886</span>
<span class="m" style="left:95.4px;top:0.4px;color:#12272e">256.242581</span>
<span class="m" style="left:193.5px;top:0.4px;color:#12272e">fe80::821f:12ff:feeb:a826</span>
<span class="m" style="left:421.5px;top:0.4px;color:#12272e">fe80::e615:f6ff:fef6:5c8e</span>
<span class="m" style="left:639.4px;top:0.4px;color:#12272e">DIN</span>
<span class="m" style="right:146.5px;top:0.4px;color:#12272e">101</span>
<span class="m" style="left:771.8px;top:0.4px;color:#12272e">CableCheckRes</span>
</div>
<div style="left:952px;top:152px;width:911.5px;height:17px;overflow:hidden;">
<span class="m" style="right:822.6px;top:0.4px;color:#12272e">1894</span>
<span class="m" style="left:95.4px;top:0.4px;color:#12272e">256.901118</span>
<span class="m" style="left:193.5px;top:0.4px;color:#12272e">fe80::e615:f6ff:fef6:5c8e</span>
<span class="m" style="left:421.5px;top:0.4px;color:#12272e">fe80::821f:12ff:feeb:a826</span>
<span class="m" style="left:639.4px;top:0.4px;color:#12272e">DIN</span>
<span class="m" style="right:146.5px;top:0.4px;color:#12272e">106</span>
<span class="m" style="left:771.8px;top:0.4px;color:#12272e">PreChargeReq</span>
</div>
<div style="left:952px;top:169px;width:911.5px;height:17px;overflow:hidden;">
<span class="m" style="right:822.6px;top:0.4px;color:#12272e">1897</span>
<span class="m" style="left:95.4px;top:0.4px;color:#12272e">257.112677</span>
<span class="m" style="left:193.5px;top:0.4px;color:#12272e">fe80::821f:12ff:feeb:a826</span>
<span class="m" style="left:421.5px;top:0.4px;color:#12272e">fe80::e615:f6ff:fef6:5c8e</span>
<span class="m" style="left:639.4px;top:0.4px;color:#12272e">DIN</span>
<span class="m" style="right:146.5px;top:0.4px;color:#12272e">104</span>
<span class="m" style="left:771.8px;top:0.4px;color:#12272e">PreChargeRes</span>
</div>
<div style="left:952px;top:186px;width:911.5px;height:17px;overflow:hidden;">
<span class="m" style="right:822.6px;top:0.4px;color:#12272e">1905</span>
<span class="m" style="left:95.4px;top:0.4px;color:#12272e">257.213409</span>
<span class="m" style="left:193.5px;top:0.4px;color:#12272e">fe80::e615:f6ff:fef6:5c8e</span>
<span class="m" style="left:421.5px;top:0.4px;color:#12272e">fe80::821f:12ff:feeb:a826</span>
<span class="m" style="left:639.4px;top:0.4px;color:#12272e">DIN</span>
<span class="m" style="right:146.5px;top:0.4px;color:#12272e">106</span>
<span class="m" style="left:771.8px;top:0.4px;color:#12272e">PreChargeReq</span>
</div>
<div style="left:952px;top:203px;width:911.5px;height:17px;overflow:hidden;">
<span class="m" style="right:822.6px;top:0.4px;color:#12272e">1908</span>
<span class="m" style="left:95.4px;top:0.4px;color:#12272e">257.423394</span>
<span class="m" style="left:193.5px;top:0.4px;color:#12272e">fe80::821f:12ff:feeb:a826</span>
<span class="m" style="left:421.5px;top:0.4px;color:#12272e">fe80::e615:f6ff:fef6:5c8e</span>
<span class="m" style="left:639.4px;top:0.4px;color:#12272e">DIN</span>
<span class="m" style="right:146.5px;top:0.4px;color:#12272e">105</span>
<span class="m" style="left:771.8px;top:0.4px;color:#12272e">PreChargeRes</span>
</div>
<div style="left:952px;top:220px;width:911.5px;height:17px;overflow:hidden;">
<span class="m" style="right:822.6px;top:0.4px;color:#12272e">1916</span>
<span class="m" style="left:95.4px;top:0.4px;color:#12272e">257.817718</span>
<span class="m" style="left:193.5px;top:0.4px;color:#12272e">fe80::e615:f6ff:fef6:5c8e</span>
<span class="m" style="left:421.5px;top:0.4px;color:#12272e">fe80::821f:12ff:feeb:a826</span>
<span class="m" style="left:639.4px;top:0.4px;color:#12272e">DIN</span>
<span class="m" style="right:146.5px;top:0.4px;color:#12272e">106</span>
<span class="m" style="left:771.8px;top:0.4px;color:#12272e">PreChargeReq</span>
</div>
<div style="left:952px;top:237px;width:911.5px;height:13px;overflow:hidden;">
<span class="m" style="right:822.6px;top:0.4px;color:#12272e">1918</span>
<span class="m" style="left:95.4px;top:0.4px;color:#12272e">258.032675</span>
<span class="m" style="left:193.5px;top:0.4px;color:#12272e">fe80::821f:12ff:feeb:a826</span>
<span class="m" style="left:421.5px;top:0.4px;color:#12272e">fe80::e615:f6ff:fef6:5c8e</span>
<span class="m" style="left:639.4px;top:0.4px;color:#12272e">DIN</span>
<span class="m" style="right:146.5px;top:0.4px;color:#12272e">105</span>
<span class="m" style="left:771.8px;top:0.4px;color:#12272e">PreChargeRes</span>
</div>
<div style="left:960px;top:118px;width:1px;height:132px;background:#8a8a9a;"></div>
<div style="left:1863.5px;top:97px;width:27.5px;height:153px;background:#e7e6ff;box-sizing:border-box;border:1px solid #b8b8c8;border-top:none;"></div>
<div style="left:1864.5px;top:97px;width:25.5px;height:5px;background:#d9eafa;"></div>
<div style="left:1864.5px;top:101.5px;width:25.5px;height:1px;background:#3a80e0;"></div>
<div style="left:1891px;top:97px;width:17px;height:153px;background:#f0f0f0;"></div>
<svg style="left:1895px;top:102px;" width="9" height="7" viewBox="0 0 9 7"><path d="M1,5.5 L4.5,2 L8,5.5" fill="none" stroke="#484848" stroke-width="1.9"/></svg>
<svg style="left:1895px;top:238px;" width="9" height="7" viewBox="0 0 9 7"><path d="M1,1.5 L4.5,5 L8,1.5" fill="none" stroke="#484848" stroke-width="1.9"/></svg>
<div style="left:1892.5px;top:118px;width:14px;height:16px;background:#cdcdcd;"></div>
<div style="left:951px;top:250px;width:959px;height:17px;background:#f0f0f0;"></div>
<div style="left:969px;top:251px;width:452px;height:15px;background:#cdcdcd;"></div>
<svg style="left:957px;top:254px;" width="7" height="9" viewBox="0 0 7 9"><path d="M5.5,1 L2,4.5 L5.5,8" fill="none" stroke="#484848" stroke-width="1.9"/></svg>
<svg style="left:1851.5px;top:254px;" width="7" height="9" viewBox="0 0 7 9"><path d="M1.5,1 L5,4.5 L1.5,8" fill="none" stroke="#484848" stroke-width="1.9"/></svg>
<div style="left:951px;top:267px;width:959px;height:1px;background:#8c8c8c;"></div>
<div style="left:951px;top:268px;width:959px;height:6px;background:#f0f0f0;"></div>
<div style="left:953px;top:273px;width:650px;height:713px;background:#fff;box-sizing:border-box;border:1px solid #828790;border-left:none;"></div>
<div style="left:972px;top:274px;width:630px;height:17px;background:#f0f0f0;"></div>
<span class="m" style="left:975px;top:275.8px;color:#000;">Frame 1886: 101 bytes on wire (808 bits), 101 bytes captured (808 bits)</span>
<svg style="left:957.5px;top:277.5px;" width="8" height="10" viewBox="0 0 8 10"><path d="M2,1 L6,5 L2,9" fill="none" stroke="#a0a0a0" stroke-width="1.5"/></svg>
<div style="left:972px;top:291px;width:630px;height:17px;background:#f0f0f0;"></div>
<span class="m" style="left:975px;top:292.8px;color:#000;">Ethernet II, Src: Microchi_eb:a8:26 (80:1f:12:eb:a8:26), Dst: TexasIns_f6:5c:8e (e4:15:f6:f6:5c:8e)</span>
<svg style="left:957.5px;top:294.5px;" width="8" height="10" viewBox="0 0 8 10"><path d="M2,1 L6,5 L2,9" fill="none" stroke="#a0a0a0" stroke-width="1.5"/></svg>
<div style="left:972px;top:308px;width:630px;height:17px;background:#f0f0f0;"></div>
<span class="m" style="left:975px;top:309.8px;color:#000;">Internet Protocol Version 6, Src: fe80::821f:12ff:feeb:a826, Dst: fe80::e615:f6ff:fef6:5c8e</span>
<svg style="left:957.5px;top:311.5px;" width="8" height="10" viewBox="0 0 8 10"><path d="M2,1 L6,5 L2,9" fill="none" stroke="#a0a0a0" stroke-width="1.5"/></svg>
<div style="left:972px;top:325px;width:630px;height:17px;background:#f0f0f0;"></div>
<span class="m" style="left:975px;top:326.8px;color:#000;">Transmission Control Protocol, Src Port: 51181, Dst Port: 57426, Seq: 483, Ack: 479, Len: 27</span>
<svg style="left:957.5px;top:328.5px;" width="8" height="10" viewBox="0 0 8 10"><path d="M2,1 L6,5 L2,9" fill="none" stroke="#a0a0a0" stroke-width="1.5"/></svg>
<div style="left:972px;top:342px;width:630px;height:17px;background:#f0f0f0;"></div>
<span class="m" style="left:975px;top:343.8px;color:#000;">V2G Transfer Protocol</span>
<svg style="left:956px;top:347px;" width="10" height="8" viewBox="0 0 10 8"><path d="M1,1.5 L5,5.5 L9,1.5" fill="none" stroke="#3c3c3c" stroke-width="1.8"/></svg>
<span class="m" style="left:995px;top:360.8px;color:#000;">SDP Protocol Version: 0x01  (V2GTP Version 1)</span>
<span class="m" style="left:995px;top:377.8px;color:#000;">SDP Inverted Protocol Version: 0xfe  (V2GTP Version 1)</span>
<span class="m" style="left:995px;top:394.8px;color:#000;">SDP Payload Type: 0x8001  (EXI ENCODED)</span>
<span class="m" style="left:995px;top:411.8px;color:#000;">SDP Payload Length: 0x00000013</span>
<div style="left:972px;top:427px;width:630px;height:17px;background:#f0f0f0;"></div>
<span class="m" style="left:975px;top:428.8px;color:#000;">V2G Efficient XML Interchange</span>
<svg style="left:956px;top:432px;" width="10" height="8" viewBox="0 0 10 8"><path d="M1,1.5 L5,5.5 L9,1.5" fill="none" stroke="#3c3c3c" stroke-width="1.8"/></svg>
<span class="m" style="left:995px;top:445.8px;color:#000;">V2G DIN Message</span>
<svg style="left:976px;top:449px;" width="10" height="8" viewBox="0 0 10 8"><path d="M1,1.5 L5,5.5 L9,1.5" fill="none" stroke="#3c3c3c" stroke-width="1.8"/></svg>
<span class="m" style="left:1015px;top:462.8px;color:#000;">Header</span>
<svg style="left:996px;top:466px;" width="10" height="8" viewBox="0 0 10 8"><path d="M1,1.5 L5,5.5 L9,1.5" fill="none" stroke="#3c3c3c" stroke-width="1.8"/></svg>
<span class="m" style="left:1035px;top:479.8px;color:#000;">[SessionID: CD2047D93BA99541]</span>
<span class="m" style="left:1015px;top:496.8px;color:#000;">Body</span>
<svg style="left:996px;top:500px;" width="10" height="8" viewBox="0 0 10 8"><path d="M1,1.5 L5,5.5 L9,1.5" fill="none" stroke="#3c3c3c" stroke-width="1.8"/></svg>
<span class="m" style="left:1035px;top:513.8px;color:#000;">CableCheckRes</span>
<svg style="left:1016px;top:517px;" width="10" height="8" viewBox="0 0 10 8"><path d="M1,1.5 L5,5.5 L9,1.5" fill="none" stroke="#3c3c3c" stroke-width="1.8"/></svg>
<span class="m" style="left:1055px;top:530.8px;color:#000;">[ResponseCode: OK (0)]</span>
<span class="m" style="left:1055px;top:547.8px;color:#000;">DC_EVSEStatus</span>
<svg style="left:1036px;top:551px;" width="10" height="8" viewBox="0 0 10 8"><path d="M1,1.5 L5,5.5 L9,1.5" fill="none" stroke="#3c3c3c" stroke-width="1.8"/></svg>
<div style="left:1072px;top:563px;width:530px;height:17px;background:#cce8ff;"></div>
<span class="m" style="left:1075px;top:564.8px;color:#000;">[EVSEIsolationStatus: Valid (1)]</span>
<span class="m" style="left:1075px;top:581.8px;color:#000;">[EVSEStatusCode: EVSE Ready (1)]</span>
<span class="m" style="left:1075px;top:598.8px;color:#000;">[NotificationMaxDelay: 0]</span>
<span class="m" style="left:1075px;top:615.8px;color:#000;">[EVSENotification: None (0)]</span>
<span class="m" style="left:1055px;top:632.8px;color:#000;">[EVSEProcessing: Finished (0)]</span>
<div style="left:1603px;top:273px;width:5px;height:713px;background:#f7f7f7;"></div>
<div style="left:1608px;top:273px;width:400px;height:713px;background:#fff;box-sizing:border-box;border:1px solid #828790;"></div>
<div style="left:1609px;top:274px;width:42px;height:713px;background:#f0f0f0;"></div>
<span class="m" style="left:1616px;top:274.9px;color:#9a9a9a;">0000</span>
<span class="m" style="left:1658.2px;top:274.9px;color:#000;">e4 15 f6 f6 5c 8e 80 1f  12 eb a8 26 86 dd 60 00</span>
<span class="m" style="left:1616px;top:289.9px;color:#9a9a9a;">0010</span>
<span class="m" style="left:1658.2px;top:289.9px;color:#000;">00 00 00 2f 06 ff fe 80  00 00 00 00 00 00 82 1f</span>
<span class="m" style="left:1616px;top:304.9px;color:#9a9a9a;">0020</span>
<span class="m" style="left:1658.2px;top:304.9px;color:#000;">12 ff fe eb a8 26 fe 80  00 00 00 00 00 00 e6 15</span>
<span class="m" style="left:1616px;top:319.9px;color:#9a9a9a;">0030</span>
<span class="m" style="left:1658.2px;top:319.9px;color:#000;">f6 ff fe f6 5c 8e c7 ed  e0 52 12 f1 7a 3c 5e 0d</span>
<span class="m" style="left:1616px;top:334.9px;color:#9a9a9a;">0040</span>
<span class="m" style="left:1658.2px;top:334.9px;color:#000;">83 90 50 18 09 8a 66 0a  00 00 01 fe 80 01 00 00</span>
<span class="m" style="left:1616px;top:349.9px;color:#555;">0050</span>
<span class="m" style="left:1658.2px;top:349.9px;color:#000;">00 13</span>
<span class="m" style="left:1616px;top:364.9px;color:#555;">0060</span>
<span class="m" style="left:1658.2px;top:364.9px;color:#000;"></span>
<div style="left:1700px;top:350px;width:220px;height:15px;background:#0078d7;"></div>
<span class="m" style="left:1700.2px;top:349.9px;color:#fff;">80 9a 02 33 48 11  f6 4e ea 01 c0 00</span>
<div style="left:1657.5px;top:365px;width:98.5px;height:15px;background:#0078d7;"></div>
<span class="m" style="left:1658.2px;top:364.9px;color:#fff;">40 80 00 00 00</span>
<div style="left:948px;top:0px;width:1px;height:713px;background:#bdbdbd;"></div>
<div style="left:949px;top:0px;width:2px;height:713px;background:#56565a;"></div>
<div style="left:951px;top:0px;width:1px;height:713px;background:#b8b8bc;"></div>
<svg style="left:0px;top:0px;" width="1899" height="713" viewBox="0 0 1899 713"><path d="M106.1,564.5 C101.4,565.8 101.0,568.2 99.0,570.0 C97.0,571.8 95.0,574.0 94.2,575.5 C93.4,577.0 93.4,577.8 94.2,578.7 C95.0,579.6 93.5,580.5 99.0,581.1 C104.5,581.7 114.8,581.9 127.4,582.3 C140.0,582.7 159.0,583.3 174.8,583.4 C190.6,583.5 209.0,583.3 222.2,583.0 C235.4,582.7 243.3,582.0 253.8,581.4 C264.3,580.8 274.9,579.2 285.4,579.2 C295.9,579.2 307.8,580.4 317.0,581.4 C326.2,582.4 334.1,584.8 340.7,585.0 C347.3,585.2 352.6,584.0 356.5,582.7 C360.4,581.4 362.7,579.5 364.4,577.1 C366.1,574.7 366.7,571.4 366.7,568.4 C366.7,565.4 365.8,561.5 364.4,559.0 C362.9,556.5 361.9,554.9 358.0,553.4 C354.1,551.9 350.2,550.6 340.7,550.3 C331.2,550.0 315.7,551.1 301.2,551.8 C286.7,552.4 269.6,553.4 253.8,554.2 C238.0,555.0 222.2,555.7 206.4,556.6 C190.6,557.5 172.2,558.8 159.0,559.7 C145.8,560.6 136.2,561.3 127.4,562.1 C118.6,562.9 110.8,563.2 106.1,564.5Z" fill="none" stroke="#1616c8" stroke-width="2" stroke-linejoin="round"/><path d="M1072.7,563.7 C1066.7,565.3 1060.6,567.6 1056.9,570.0 C1053.2,572.4 1050.8,575.3 1050.5,577.9 C1050.2,580.5 1051.3,583.0 1055.3,585.8 C1059.2,588.6 1066.6,592.3 1074.2,594.5 C1081.8,596.7 1090.0,597.9 1101.1,599.2 C1112.2,600.5 1128.8,601.7 1140.6,602.4 C1152.4,603.1 1161.7,603.5 1172.2,603.2 C1182.7,602.9 1193.3,601.5 1203.8,600.8 C1214.3,600.1 1224.9,599.3 1235.4,599.2 C1245.9,599.1 1257.8,600.4 1267.0,600.0 C1276.2,599.6 1284.1,598.5 1290.7,596.9 C1297.3,595.3 1302.5,593.5 1306.5,590.6 C1310.5,587.7 1312.8,583.5 1314.4,579.5 C1316.0,575.5 1317.0,570.7 1315.9,566.9 C1314.8,563.1 1312.2,559.1 1308.0,556.6 C1303.8,554.1 1297.5,552.6 1290.7,551.8 C1283.9,551.0 1278.8,551.3 1267.0,551.8 C1255.2,552.3 1235.4,553.9 1219.6,555.0 C1203.8,556.1 1188.0,557.4 1172.2,558.2 C1156.4,559.0 1138.0,559.3 1124.8,559.7 C1111.6,560.1 1101.9,559.8 1093.2,560.5 C1084.5,561.2 1078.8,562.1 1072.7,563.7Z" fill="none" stroke="#22e622" stroke-width="2.8" stroke-linejoin="round"/></svg>
</div></body></html>
